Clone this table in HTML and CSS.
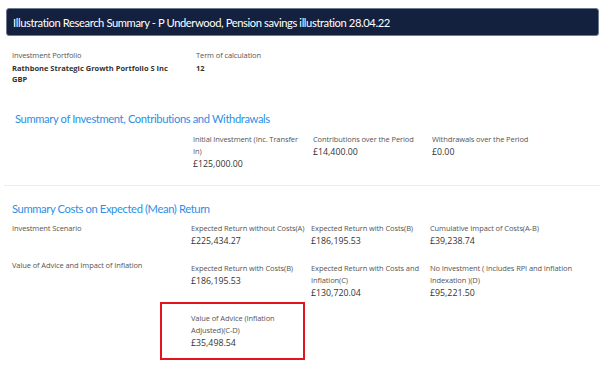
FILE: index.html
```html
<!DOCTYPE html>
<html lang="en">
<head>
<meta charset="utf-8">
<title>Illustration Research Summary</title>
<link rel="stylesheet" href="styles.css">
</head>
<body>
<div class="page">
  <div class="header">Illustration Research Summary - P Underwood, Pension savings illustration 28.04.22</div>

  <div class="info">
    <div class="info-col first">
      <div class="lbl">Investment Portfolio</div>
      <div class="strong">Rathbone Strategic Growth Portfolio S Inc GBP</div>
    </div>
    <div class="info-col">
      <div class="lbl">Term of calculation</div>
      <div class="strong">12</div>
    </div>
  </div>

  <section class="sec sec1">
    <h2 class="sec-title">Summary of Investment, Contributions and Withdrawals</h2>
    <div class="row row-s1">
      <div class="cell"></div>
      <div class="cell">
        <div class="lbl">Initial Investment (Inc. Transfer In)</div>
        <div class="val">£125,000.00</div>
      </div>
      <div class="cell">
        <div class="lbl">Contributions over the Period</div>
        <div class="val">£14,400.00</div>
      </div>
      <div class="cell">
        <div class="lbl">Withdrawals over the Period</div>
        <div class="val">£0.00</div>
      </div>
    </div>
  </section>

  <section class="sec sec2">
    <h2 class="sec-title">Summary Costs on Expected (Mean) Return</h2>
    <div class="row row-a">
      <div class="cell"><div class="lbl">Investment Scenario</div></div>
      <div class="cell">
        <div class="lbl">Expected Return without Costs(A)</div>
        <div class="val">£225,434.27</div>
      </div>
      <div class="cell">
        <div class="lbl">Expected Return with Costs(B)</div>
        <div class="val">£186,195.53</div>
      </div>
      <div class="cell">
        <div class="lbl">Cumulative Impact of Costs(A-B)</div>
        <div class="val">£39,238.74</div>
      </div>
    </div>
    <div class="row row-b">
      <div class="cell"><div class="lbl">Value of Advice and Impact of Inflation</div></div>
      <div class="cell pad">
        <div class="lbl">Expected Return with Costs(B)</div>
        <div class="val">£186,195.53</div>
      </div>
      <div class="cell pad">
        <div class="lbl">Expected Return with Costs and Inflation(C)</div>
        <div class="val">£130,720.04</div>
      </div>
      <div class="cell pad">
        <div class="lbl">No Investment ( Includes RPI and Inflation Indexation )(D)</div>
        <div class="val">£95,221.50</div>
      </div>
    </div>
    <div class="row row-c">
      <div class="cell"></div>
      <div class="cell highlighted">
        <div class="lbl">Value of Advice (Inflation Adjusted)(C-D)</div>
        <div class="val">£35,498.54</div>
        <div class="redbox"></div>
      </div>
    </div>
  </section>
</div>
</body>
</html>
```

FILE: styles.css
```css
html, body {
  margin: 0;
  padding: 0;
  background: #ffffff;
}

body {
  font-family: "Open Sans", "Noto Sans", "Liberation Sans", sans-serif;
  color: #333333;
}

.page {
  width: 600px;
  min-height: 377px;
  box-sizing: border-box;
  padding-top: 8px;
}

.header {
  margin: 0 1px 0 6px;
  height: 28px;
  box-sizing: border-box;
  background: #13213f;
  border: 1px solid #6f7a90;
  border-radius: 3px;
  color: #ffffff;
  font-family: Lato, "Open Sans", sans-serif;
  font-size: 11.2px;
  letter-spacing: -0.4px;
  padding-left: 6px;
  display: flex;
  align-items: center;
}

.lbl {
  font-size: 7.5px;
  line-height: 12px;
  color: #555555;
  letter-spacing: -0.1px;
}

.val {
  font-size: 8.8px;
  line-height: 14px;
  color: #333333;
}

.strong {
  font-size: 7.5px;
  line-height: 11px;
  font-weight: 700;
  color: #333333;
}

.info {
  display: grid;
  grid-template-columns: 184px 150px;
  padding: 13px 0 0 12px;
  height: 49px;
}

.info .lbl {
  margin-bottom: 2px;
}

.info-col.first .strong {
  width: 160px;
}

.sec-title {
  margin: 0;
  font-family: Lato, "Open Sans", sans-serif;
  font-weight: 400;
  font-size: 11.2px;
  line-height: 16px;
  letter-spacing: -0.38px;
  color: #2d8fe6;
}

.sec1 {
  padding: 13px 0 0 0;
  height: 74px;
  border-bottom: 1px solid #ececec;
  margin-left: 4px;
}

.sec1 .sec-title {
  padding-left: 11px;
}

.row {
  display: grid;
  grid-template-columns: 179px 120px 119px 1fr;
}

.row-s1 {
  padding-left: 10px;
  margin-top: 6px;
}

.sec2 {
  padding: 15px 0 0 12px;
}

.row-a {
  margin-top: 5px;
}

.row-b {
  margin-top: 11px;
}

.row-b .cell.pad {
  padding-top: 3px;
}

.row-c {
  margin-top: 12px;
}

.cell {
  padding-right: 6px;
}

.highlighted {
  position: relative;
}

.redbox {
  position: absolute;
  left: -31px;
  top: -10px;
  width: 145px;
  height: 58px;
  box-sizing: border-box;
  border: 2px solid #e3141e;
}
```
